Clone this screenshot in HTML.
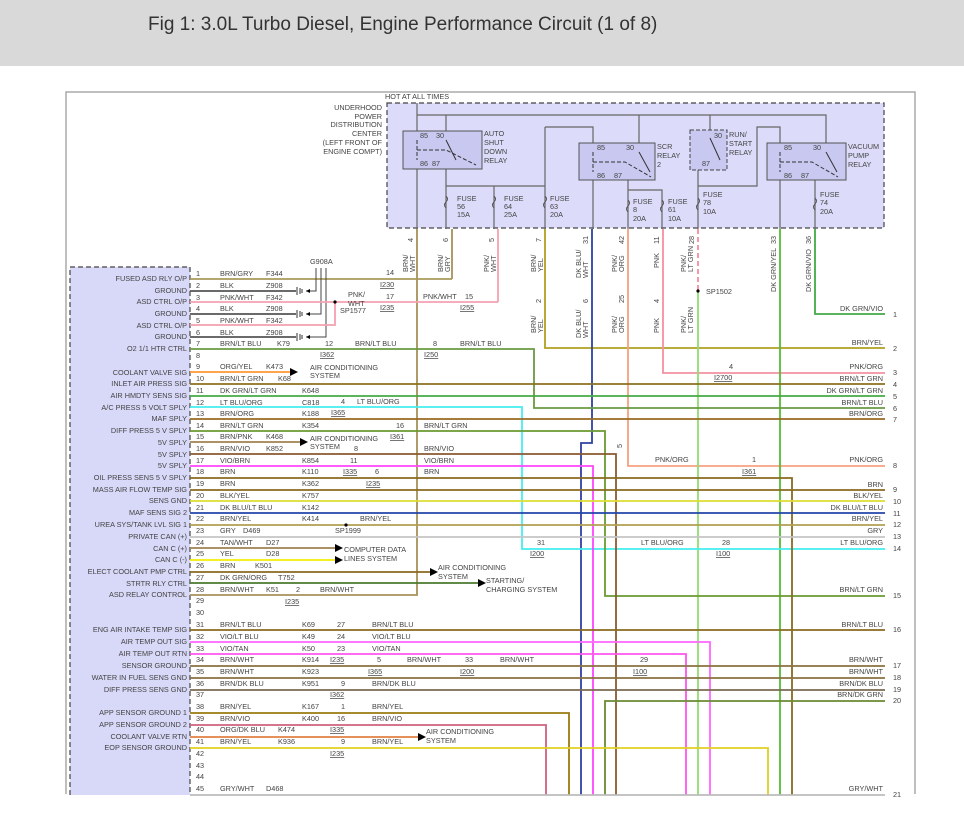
<!DOCTYPE html>
<html><head><meta charset="utf-8">
<style>
html,body{margin:0;padding:0;background:#fff;width:964px;height:817px;overflow:hidden}
.hdr{position:absolute;left:0;top:0;width:964px;height:66px;background:#d9d9d9}
.hdr span{position:absolute;left:148px;top:14px;font:19px "Liberation Sans",sans-serif;color:#333}
svg{position:absolute;left:0;top:0}
text{font-family:"Liberation Sans",sans-serif;font-size:7.3px;fill:#444}
.r{text-anchor:end}
.u{text-decoration:underline}
</style></head><body>
<div class="hdr"><span>Fig 1: 3.0L Turbo Diesel, Engine Performance Circuit (1 of 8)</span></div>
<svg width="964" height="817" viewBox="0 0 964 817">
<path d="M66 794 V92 H915 V794" fill="none" stroke="#aaa" stroke-width="1.5"/>
<rect x="387" y="103" width="497" height="125" fill="#dcdcfa" stroke="#444" stroke-dasharray="5,3" stroke-width="1.2"/>
<rect x="70" y="267" width="120" height="540" fill="#d8d8f8" stroke="#444" stroke-dasharray="5,3" stroke-width="1.2"/>
<rect x="66" y="795" width="900" height="22" fill="#fff"/>
<text x="385" y="99">HOT AT ALL TIMES</text>
<text class="r" x="382" y="110">UNDERHOOD</text>
<text class="r" x="382" y="119">POWER</text>
<text class="r" x="382" y="127">DISTRIBUTION</text>
<text class="r" x="382" y="136">CENTER</text>
<text class="r" x="382" y="145">(LEFT FRONT OF</text>
<text class="r" x="382" y="154">ENGINE COMPT)</text>
<g fill="none" stroke="#666" stroke-width="1.2">
<path d="M417 103 V229 M417 115 H826 V143 M446 115 V131 M710 115 V130 M639 115 V143"/>
<path d="M446 169 V229 M446 186 H545 M494 186 V229 M545 127 V229 M545 127 H593 V143"/>
<path d="M593 180 V229 M628 180 V229 M628 190 H662 V229 M698 170 V229 M698 186 H757 V127 H780 V143 M780 180 V229 M815 180 V229"/>
</g>
<g fill="#c8c8f0" stroke="#555" stroke-width="1">
<rect x="403" y="131" width="79" height="38"/>
<rect x="579" y="143" width="76" height="37"/>
<rect x="767" y="143" width="79" height="37"/>
</g>
<rect x="690" y="130" width="37" height="40" fill="#c8c8f0" stroke="#444" stroke-dasharray="4,2"/>
<g fill="none" stroke="#333" stroke-width="1">
<path d="M417 140 V160 M417 150 H446 L476 165 M593 152 V172 M593 162 H625 L651 177 M780 152 V172 M780 162 H812 L838 177" stroke-dasharray="4,2"/>
<path d="M446 140 L456 160 M639 152 L650 172 M826 152 L837 172 M710 138 L720 160"/>
</g>
<g fill="none" stroke="#555" stroke-width="1">
<path d="M446 196 q3 3 0 6 q-3 3 0 6 M494 196 q3 3 0 6 q-3 3 0 6 M545 196 q3 3 0 6 q-3 3 0 6 M628 200 q3 3 0 6 q-3 3 0 6 M662 200 q3 3 0 6 q-3 3 0 6 M698 198 q3 3 0 6 q-3 3 0 6 M815 198 q3 3 0 6 q-3 3 0 6"/>
</g>
<text x="420" y="138">85</text><text x="436" y="138">30</text>
<text x="420" y="166">86</text><text x="432" y="166">87</text>
<text x="484" y="136">AUTO</text><text x="484" y="145">SHUT</text><text x="484" y="154">DOWN</text><text x="484" y="163">RELAY</text>
<text x="597" y="150">85</text><text x="626" y="150">30</text><text x="597" y="178">86</text><text x="614" y="178">87</text>
<text x="657" y="149">SCR</text><text x="657" y="158">RELAY</text><text x="657" y="167">2</text>
<text x="714" y="138">30</text><text x="702" y="166">87</text>
<text x="729" y="137">RUN/</text><text x="729" y="146">START</text><text x="729" y="155">RELAY</text>
<text x="784" y="150">85</text><text x="813" y="150">30</text><text x="784" y="178">86</text><text x="801" y="178">87</text>
<text x="848" y="149">VACUUM</text><text x="848" y="158">PUMP</text><text x="848" y="167">RELAY</text>
<text x="457" y="201">FUSE</text><text x="457" y="209">56</text><text x="457" y="217">15A</text>
<text x="504" y="201">FUSE</text><text x="504" y="209">64</text><text x="504" y="217">25A</text>
<text x="550" y="201">FUSE</text><text x="550" y="209">63</text><text x="550" y="217">20A</text>
<text x="633" y="204">FUSE</text><text x="633" y="212">8</text><text x="633" y="221">20A</text>
<text x="668" y="204">FUSE</text><text x="668" y="212">61</text><text x="668" y="221">10A</text>
<text x="703" y="197">FUSE</text><text x="703" y="205">78</text><text x="703" y="214">10A</text>
<text x="820" y="197">FUSE</text><text x="820" y="205">74</text><text x="820" y="214">20A</text>

<g fill="none" stroke-width="1.8">
<path d="M417 229 V595 H190" stroke="#a8905a"/>
<path d="M452 229 V279" stroke="#a8905a"/>
<path d="M498 229 V302" stroke="#f4a0b0"/>
<path d="M545 229 V348 H885" stroke="#b0a020"/>
<path d="M592 229 V443 H581 V795" stroke="#3040a0"/>
<path d="M628 229 V466 H885" stroke="#f8a080"/>
<path d="M663 229 V373 H885" stroke="#f490a0"/>
<path d="M698 229 V290" stroke="#f48aa0" stroke-dasharray="5,3"/>
<path d="M698 292 V795" stroke="#90dd70"/>
<path d="M780 229 V795" stroke="#55bb33"/>
<path d="M815 229 V314 H885" stroke="#44aa44"/>
</g>
<circle cx="698" cy="291" r="1.6" fill="#000"/>
<text x="706" y="294">SP1502</text>

<g fill="none" stroke-width="1.8">
<path d="M190 279 H452" stroke="#a89a5a"/>
<path d="M190 291 H296 M190 314 H296 M190 337 H296" stroke="#555"/>
<path d="M316 268 V291 H306 M321 268 V314 H306 M326 268 V337 H306" stroke="#444" stroke-width="1"/>
<path d="M190 302 H498" stroke="#f4a0b0"/>
<path d="M190 325 H335 V302" stroke="#f4a0b0"/>
<path d="M190 349 H534 V408 H885" stroke="#6a9a40"/>
<path d="M190 372 H290" stroke="#ff9933"/>
<path d="M190 384 H885" stroke="#8a7020"/>
<path d="M190 396 H885" stroke="#44aa44"/>
<path d="M190 407 H522 V549 H885" stroke="#44eeee"/>
<path d="M190 419 H885" stroke="#9a6a20"/>
<path d="M190 431 H605 V596 H885" stroke="#6a9a30"/>
<path d="M190 442 H300" stroke="#a08050"/>
<path d="M190 454 H616 V795" stroke="#8a5a30"/>
<path d="M190 466 H593 V795" stroke="#ff44ff"/>
<path d="M190 478 H792 V795" stroke="#8a6a20"/>
<path d="M190 490 H885" stroke="#8a6a20"/>
<path d="M190 501 H885" stroke="#dddd30"/>
<path d="M190 513 H885" stroke="#2244aa"/>
<path d="M190 525 H885" stroke="#b0a050"/>
<path d="M190 537 H885" stroke="#c4c4c4"/>
<path d="M190 548 H335" stroke="#a08050"/>
<path d="M190 560 H335" stroke="#f0f000"/>
<path d="M190 572 H430" stroke="#8a6a20"/>
<path d="M190 583 H478" stroke="#4a7a30"/>
<path d="M190 630 H885" stroke="#8a6a20"/>
<path d="M190 642 H710 V795" stroke="#ff66ff"/>
<path d="M190 654 H686 V795" stroke="#ff55ee"/>
<path d="M190 666 H885" stroke="#8a7040"/>
<path d="M190 678 H885" stroke="#8a7040"/>
<path d="M190 690 H885" stroke="#7a6a50"/>
<path d="M605 795 V701 H885" stroke="#6a8a30"/>
<path d="M190 713 H569 V795" stroke="#9a7a10"/>
<path d="M190 725 H546 V795" stroke="#d06080"/>
<path d="M190 737 H418" stroke="#e08040"/>
<path d="M190 748 H768 V795" stroke="#e0d020"/>
<path d="M190 795 H885" stroke="#bbb"/>
</g>
<!-- ground symbols -->
<g fill="none" stroke="#333" stroke-width="1">
<path d="M297 287 V295 M300 288 V294 M302 289 V293 M297 310 V318 M300 311 V317 M302 312 V316 M297 333 V341 M300 334 V340 M302 335 V339"/>
</g>
<g fill="#000">
<path d="M290 368 l8 4 l-8 4z M300 438 l8 4 l-8 4z M335 544 l8 4 l-8 4z M335 556 l8 4 l-8 4z M430 568 l8 4 l-8 4z M478 579 l8 4 l-8 4z M418 733 l8 4 l-8 4z"/>
<path d="M306 291 l4 -2 v4z M306 314 l4 -2 v4z M306 337 l4 -2 v4z"/>
</g>
<circle cx="335" cy="302" r="1.6" fill="#000"/>
<circle cx="346" cy="525" r="1.6" fill="#000"/>

<text x="310" y="264">G908A</text>
<text x="348" y="297">PNK/</text><text x="348" y="306">WHT</text><text x="340" y="313">SP1577</text>
<text x="335" y="533">SP1999</text>
<text x="310" y="370">AIR CONDITIONING</text><text x="310" y="378">SYSTEM</text>
<text x="310" y="441">AIR CONDITIONING</text><text x="310" y="449">SYSTEM</text>
<text x="344" y="552">COMPUTER DATA</text><text x="344" y="561">LINES SYSTEM</text>
<text x="438" y="570">AIR CONDITIONING</text><text x="438" y="579">SYSTEM</text>
<text x="486" y="583">STARTING/</text><text x="486" y="592">CHARGING SYSTEM</text>
<text x="426" y="734">AIR CONDITIONING</text><text x="426" y="743">SYSTEM</text>

<g>
<text class="r" x="187" y="281">FUSED ASD RLY O/P</text>
<text class="r" x="187" y="293">GROUND</text>
<text class="r" x="187" y="304">ASD CTRL O/P</text>
<text class="r" x="187" y="316">GROUND</text>
<text class="r" x="187" y="328">ASD CTRL O/P</text>
<text class="r" x="187" y="339">GROUND</text>
<text class="r" x="187" y="351">O2 1/1 HTR CTRL</text>
<text class="r" x="187" y="375">COOLANT VALVE SIG</text>
<text class="r" x="187" y="386">INLET AIR PRESS SIG</text>
<text class="r" x="187" y="398">AIR HMDTY SENS SIG</text>
<text class="r" x="187" y="410">A/C PRESS 5 VOLT SPLY</text>
<text class="r" x="187" y="421">MAF SPLY</text>
<text class="r" x="187" y="433">DIFF PRESS 5 V SPLY</text>
<text class="r" x="187" y="445">5V SPLY</text>
<text class="r" x="187" y="457">5V SPLY</text>
<text class="r" x="187" y="468">5V SPLY</text>
<text class="r" x="187" y="480">OIL PRESS SENS 5 V SPLY</text>
<text class="r" x="187" y="492">MASS AIR FLOW TEMP SIG</text>
<text class="r" x="187" y="503">SENS GND</text>
<text class="r" x="187" y="515">MAF SENS SIG 2</text>
<text class="r" x="187" y="527">UREA SYS/TANK LVL SIG 1</text>
<text class="r" x="187" y="539">PRIVATE CAN (+)</text>
<text class="r" x="187" y="551">CAN C (+)</text>
<text class="r" x="187" y="562">CAN C (-)</text>
<text class="r" x="187" y="574">ELECT COOLANT PMP CTRL</text>
<text class="r" x="187" y="586">STRTR RLY CTRL</text>
<text class="r" x="187" y="597">ASD RELAY CONTROL</text>
<text class="r" x="187" y="632">ENG AIR INTAKE TEMP SIG</text>
<text class="r" x="187" y="644">AIR TEMP OUT SIG</text>
<text class="r" x="187" y="656">AIR TEMP OUT RTN</text>
<text class="r" x="187" y="668">SENSOR GROUND</text>
<text class="r" x="187" y="680">WATER IN FUEL SENS GND</text>
<text class="r" x="187" y="692">DIFF PRESS SENS GND</text>
<text class="r" x="187" y="715">APP SENSOR GROUND 1</text>
<text class="r" x="187" y="727">APP SENSOR GROUND 2</text>
<text class="r" x="187" y="739">COOLANT VALVE RTN</text>
<text class="r" x="187" y="750">EOP SENSOR GROUND</text>
</g>
<g>
<text x="196" y="276">1</text><text x="220" y="276">BRN/GRY</text><text x="266" y="276">F344</text>
<text x="196" y="288">2</text><text x="220" y="288">BLK</text><text x="266" y="288">Z908</text>
<text x="196" y="300">3</text><text x="220" y="300">PNK/WHT</text><text x="266" y="300">F342</text>
<text x="196" y="311">4</text><text x="220" y="311">BLK</text><text x="266" y="311">Z908</text>
<text x="196" y="323">5</text><text x="220" y="323">PNK/WHT</text><text x="266" y="323">F342</text>
<text x="196" y="335">6</text><text x="220" y="335">BLK</text><text x="266" y="335">Z908</text>
<text x="196" y="346">7</text><text x="220" y="346">BRN/LT BLU</text><text x="277" y="346">K79</text>
<text x="196" y="358">8</text>
<text x="196" y="369">9</text><text x="220" y="369">ORG/YEL</text><text x="266" y="369">K473</text>
<text x="196" y="381">10</text><text x="220" y="381">BRN/LT GRN</text><text x="278" y="381">K68</text>
<text x="196" y="393">11</text><text x="220" y="393">DK GRN/LT GRN</text><text x="302" y="393">K648</text>
<text x="196" y="405">12</text><text x="220" y="405">LT BLU/ORG</text><text x="302" y="405">C818</text>
<text x="196" y="416">13</text><text x="220" y="416">BRN/ORG</text><text x="302" y="416">K188</text>
<text x="196" y="428">14</text><text x="220" y="428">BRN/LT GRN</text><text x="302" y="428">K354</text>
<text x="196" y="439">15</text><text x="220" y="439">BRN/PNK</text><text x="266" y="439">K468</text>
<text x="196" y="451">16</text><text x="220" y="451">BRN/VIO</text><text x="266" y="451">K852</text>
<text x="196" y="463">17</text><text x="220" y="463">VIO/BRN</text><text x="302" y="463">K854</text>
<text x="196" y="474">18</text><text x="220" y="474">BRN</text><text x="302" y="474">K110</text>
<text x="196" y="486">19</text><text x="220" y="486">BRN</text><text x="302" y="486">K362</text>
<text x="196" y="498">20</text><text x="220" y="498">BLK/YEL</text><text x="302" y="498">K757</text>
<text x="196" y="510">21</text><text x="220" y="510">DK BLU/LT BLU</text><text x="302" y="510">K142</text>
<text x="196" y="521">22</text><text x="220" y="521">BRN/YEL</text><text x="302" y="521">K414</text>
<text x="196" y="533">23</text><text x="220" y="533">GRY</text><text x="243" y="533">D469</text>
<text x="196" y="545">24</text><text x="220" y="545">TAN/WHT</text><text x="266" y="545">D27</text>
<text x="196" y="556">25</text><text x="220" y="556">YEL</text><text x="266" y="556">D28</text>
<text x="196" y="568">26</text><text x="220" y="568">BRN</text><text x="255" y="568">K501</text>
<text x="196" y="580">27</text><text x="220" y="580">DK GRN/ORG</text><text x="278" y="580">T752</text>
<text x="196" y="592">28</text><text x="220" y="592">BRN/WHT</text><text x="266" y="592">K51</text>
<text x="196" y="603">29</text><text x="196" y="615">30</text>
<text x="196" y="627">31</text><text x="220" y="627">BRN/LT BLU</text><text x="302" y="627">K69</text>
<text x="196" y="639">32</text><text x="220" y="639">VIO/LT BLU</text><text x="302" y="639">K49</text>
<text x="196" y="651">33</text><text x="220" y="651">VIO/TAN</text><text x="302" y="651">K50</text>
<text x="196" y="662">34</text><text x="220" y="662">BRN/WHT</text><text x="302" y="662">K914</text>
<text x="196" y="674">35</text><text x="220" y="674">BRN/WHT</text><text x="302" y="674">K923</text>
<text x="196" y="686">36</text><text x="220" y="686">BRN/DK BLU</text><text x="302" y="686">K951</text>
<text x="196" y="697">37</text>
<text x="196" y="709">38</text><text x="220" y="709">BRN/YEL</text><text x="302" y="709">K167</text>
<text x="196" y="721">39</text><text x="220" y="721">BRN/VIO</text><text x="302" y="721">K400</text>
<text x="196" y="732">40</text><text x="220" y="732">ORG/DK BLU</text><text x="278" y="732">K474</text>
<text x="196" y="744">41</text><text x="220" y="744">BRN/YEL</text><text x="278" y="744">K936</text>
<text x="196" y="756">42</text><text x="196" y="768">43</text><text x="196" y="779">44</text>
<text x="196" y="791">45</text><text x="220" y="791">GRY/WHT</text><text x="266" y="791">D468</text>
</g>
<g>
<text x="386" y="275">14</text><text class="u" x="380" y="287">I230</text>
<text x="386" y="299">17</text><text class="u" x="380" y="310">I235</text>
<text x="423" y="299">PNK/WHT</text><text x="465" y="299">15</text><text class="u" x="460" y="310">I255</text>
<text x="325" y="346">12</text><text class="u" x="320" y="357">I362</text>
<text x="355" y="346">BRN/LT BLU</text><text x="433" y="346">8</text><text class="u" x="424" y="357">I250</text>
<text x="460" y="346">BRN/LT BLU</text>
<text x="341" y="404">4</text><text x="357" y="404">LT BLU/ORG</text><text class="u" x="331" y="415">I365</text>
<text x="396" y="428">16</text><text x="424" y="428">BRN/LT GRN</text><text class="u" x="390" y="439">I361</text>
<text x="354" y="451">8</text><text x="424" y="451">BRN/VIO</text>
<text x="350" y="463">11</text><text x="424" y="463">VIO/BRN</text><text class="u" x="343" y="474">I335</text>
<text x="375" y="474">6</text><text x="424" y="474">BRN</text><text class="u" x="366" y="486">I235</text>
<text x="360" y="521">BRN/YEL</text>
<text x="296" y="592">2</text><text x="320" y="592">BRN/WHT</text><text class="u" x="285" y="604">I235</text>
<text x="337" y="627">27</text><text x="372" y="627">BRN/LT BLU</text>
<text x="337" y="639">24</text><text x="372" y="639">VIO/LT BLU</text>
<text x="337" y="651">23</text><text x="372" y="651">VIO/TAN</text>
<text class="u" x="330" y="662">I235</text><text x="377" y="662">5</text><text x="407" y="662">BRN/WHT</text><text x="465" y="662">33</text><text x="500" y="662">BRN/WHT</text>
<text class="u" x="368" y="674">I365</text><text class="u" x="460" y="674">I200</text>
<text x="640" y="662">29</text><text class="u" x="633" y="674">I100</text>
<text x="341" y="686">9</text><text x="372" y="686">BRN/DK BLU</text><text class="u" x="330" y="697">I362</text>
<text x="341" y="709">1</text><text x="372" y="709">BRN/YEL</text>
<text x="337" y="721">16</text><text x="372" y="721">BRN/VIO</text><text class="u" x="330" y="732">I335</text>
<text x="341" y="744">9</text><text x="372" y="744">BRN/YEL</text><text class="u" x="330" y="756">I235</text>
<text x="729" y="369">4</text><text class="u" x="714" y="380">I2700</text>
<text x="655" y="462">PNK/ORG</text><text x="752" y="462">1</text><text class="u" x="742" y="474">I361</text>
<text x="537" y="545">31</text><text class="u" x="530" y="556">I200</text>
<text x="641" y="545">LT BLU/ORG</text><text x="722" y="545">28</text><text class="u" x="716" y="556">I100</text>
</g>
<g>
<text class="r" x="883" y="311">DK GRN/VIO</text><text x="893" y="317">1</text>
<text class="r" x="883" y="345">BRN/YEL</text><text x="893" y="351">2</text>
<text class="r" x="883" y="369">PNK/ORG</text><text x="893" y="375">3</text>
<text class="r" x="883" y="381">BRN/LT GRN</text><text x="893" y="387">4</text>
<text class="r" x="883" y="393">DK GRN/LT GRN</text><text x="893" y="399">5</text>
<text class="r" x="883" y="405">BRN/LT BLU</text><text x="893" y="411">6</text>
<text class="r" x="883" y="416">BRN/ORG</text><text x="893" y="422">7</text>
<text class="r" x="883" y="462">PNK/ORG</text><text x="893" y="468">8</text>
<text class="r" x="883" y="487">BRN</text><text x="893" y="492">9</text>
<text class="r" x="883" y="498">BLK/YEL</text><text x="893" y="504">10</text>
<text class="r" x="883" y="510">DK BLU/LT BLU</text><text x="893" y="516">11</text>
<text class="r" x="883" y="521">BRN/YEL</text><text x="893" y="527">12</text>
<text class="r" x="883" y="533">GRY</text><text x="893" y="539">13</text>
<text class="r" x="883" y="545">LT BLU/ORG</text><text x="893" y="551">14</text>
<text class="r" x="883" y="592">BRN/LT GRN</text><text x="893" y="598">15</text>
<text class="r" x="883" y="627">BRN/LT BLU</text><text x="893" y="632">16</text>
<text class="r" x="883" y="662">BRN/WHT</text><text x="893" y="668">17</text>
<text class="r" x="883" y="674">BRN/WHT</text><text x="893" y="680">18</text>
<text class="r" x="883" y="686">BRN/DK BLU</text><text x="893" y="692">19</text>
<text class="r" x="883" y="697">BRN/DK GRN</text><text x="893" y="703">20</text>
<text class="r" x="883" y="791">GRY/WHT</text><text x="893" y="797">21</text>
</g>
<g>
<text transform="translate(413,242) rotate(-90)">4</text>
<text transform="translate(408,272) rotate(-90)">BRN/</text><text transform="translate(415,272) rotate(-90)">WHT</text>
<text transform="translate(448,242) rotate(-90)">6</text>
<text transform="translate(443,272) rotate(-90)">BRN/</text><text transform="translate(450,272) rotate(-90)">GRY</text>
<text transform="translate(494,242) rotate(-90)">5</text>
<text transform="translate(489,272) rotate(-90)">PNK/</text><text transform="translate(496,272) rotate(-90)">WHT</text>
<text transform="translate(541,242) rotate(-90)">7</text>
<text transform="translate(536,272) rotate(-90)">BRN/</text><text transform="translate(543,272) rotate(-90)">YEL</text>
<text transform="translate(588,244) rotate(-90)">31</text>
<text transform="translate(581,278) rotate(-90)">DK BLU/</text><text transform="translate(588,278) rotate(-90)">WHT</text>
<text transform="translate(624,244) rotate(-90)">42</text>
<text transform="translate(617,272) rotate(-90)">PNK/</text><text transform="translate(624,272) rotate(-90)">ORG</text>
<text transform="translate(659,244) rotate(-90)">11</text>
<text transform="translate(659,268) rotate(-90)">PNK</text>
<text transform="translate(694,244) rotate(-90)">28</text>
<text transform="translate(686,272) rotate(-90)">PNK/</text><text transform="translate(693,272) rotate(-90)">LT GRN</text>
<text transform="translate(776,244) rotate(-90)">33</text>
<text transform="translate(776,292) rotate(-90)">DK GRN/YEL</text>
<text transform="translate(811,244) rotate(-90)">36</text>
<text transform="translate(811,292) rotate(-90)">DK GRN/VIO</text>
<text transform="translate(541,303) rotate(-90)">2</text>
<text transform="translate(536,333) rotate(-90)">BRN/</text><text transform="translate(543,333) rotate(-90)">YEL</text>
<text transform="translate(588,303) rotate(-90)">6</text>
<text transform="translate(581,338) rotate(-90)">DK BLU/</text><text transform="translate(588,338) rotate(-90)">WHT</text>
<text transform="translate(624,303) rotate(-90)">25</text>
<text transform="translate(617,333) rotate(-90)">PNK/</text><text transform="translate(624,333) rotate(-90)">ORG</text>
<text transform="translate(659,303) rotate(-90)">4</text>
<text transform="translate(659,333) rotate(-90)">PNK</text>
<text transform="translate(686,333) rotate(-90)">PNK/</text><text transform="translate(693,333) rotate(-90)">LT GRN</text>
<text transform="translate(622,448) rotate(-90)">5</text>
</g>
</svg>
</body></html>
